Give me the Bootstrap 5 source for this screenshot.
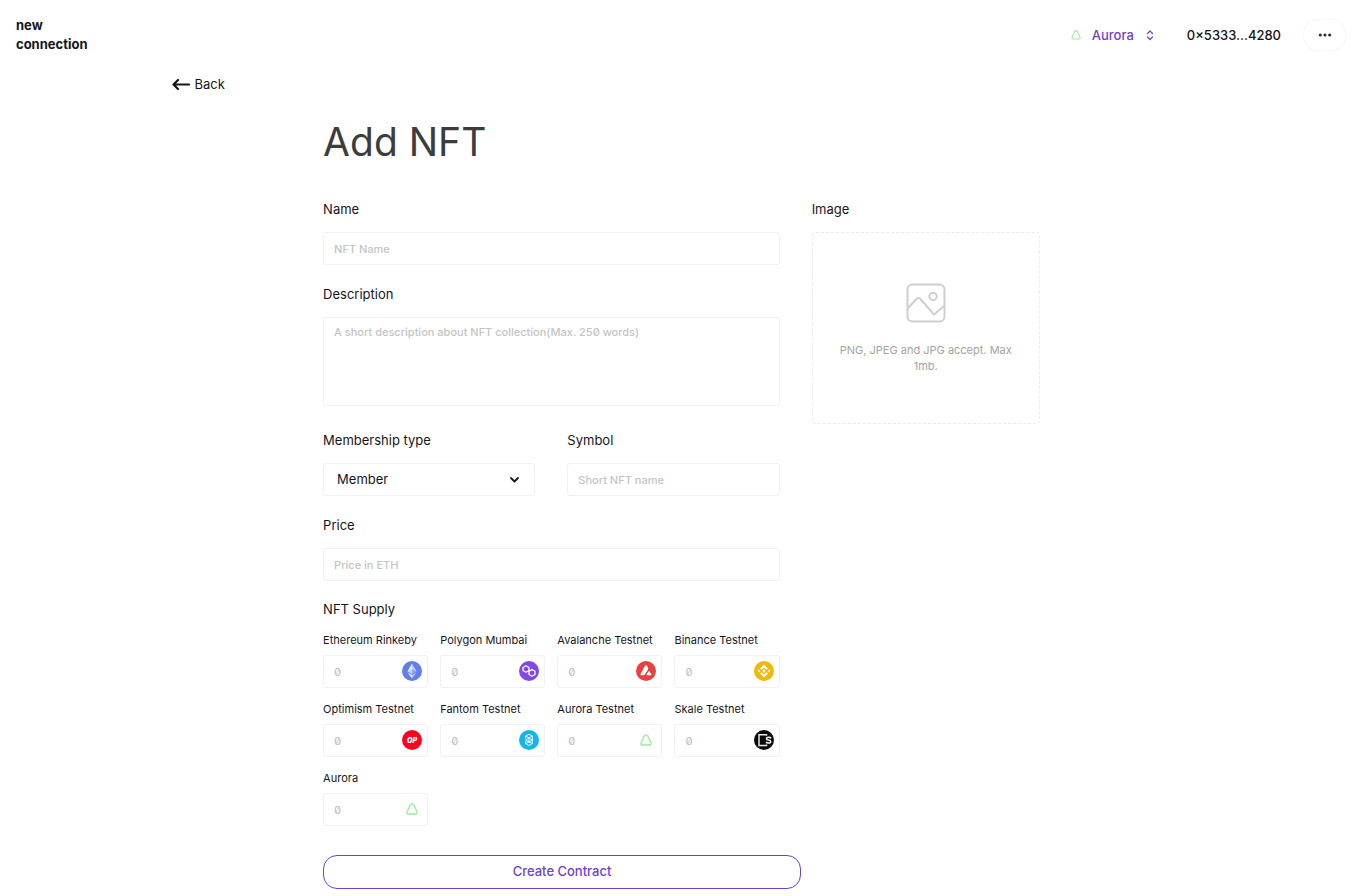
<!DOCTYPE html>
<html lang="en">
<head>
<meta charset="utf-8">
<meta name="viewport" content="width=device-width, initial-scale=1">
<title>Add NFT</title>
<link href="https://cdn.jsdelivr.net/npm/bootstrap@5.3.0/dist/css/bootstrap.min.css" rel="stylesheet">
<style>
  :root { --violet: #6f42c9; --ink: #16151c; --line: #f1f1f1; --hint: #c4c4c4; }
  body { font-family: Inter, "Liberation Sans", sans-serif; font-size: 13px; line-height: 20px; color: var(--ink); background: #fff; }
  svg { display: block; flex: none; }
  .topbar { height: 69px; padding: 0 21px 0 16px; }
  .brand { line-height: 19px; font-weight: 700; color: var(--ink); }
  .chain { color: var(--violet); font-weight: 500; font-size: 13px; line-height: 20px; border: 0; padding: 0; gap: 8px; }
  .account { font-weight: 500; margin: 0 22px 0 29px; }
  .more { width: 43px; height: 32px; border: 1px solid #f6f6f6; border-radius: 14px; padding: 0; }
  .shell { max-width: 1024px; }
  .back { color: var(--ink); margin: 5px 0 0 2px; gap: 5px; }
  .sheet { width: 70%; }
  .sheet h1 { font-size: 39px; line-height: 48px; font-weight: 400; color: #3c3c3c; margin: 22px 0 33px; }
  .cols { display: grid; grid-template-columns: 2fr 1fr; gap: 32px; align-items: start; }
  .fields { display: grid; gap: 19px; }
  .fields fieldset { margin-top: -1px; }
  .pair { display: grid; grid-template-columns: 1fr 1fr; gap: 32px; }
  .caption { display: block; float: none; font-size: 13px; line-height: 20px; margin-bottom: 13px; }
  .fields .form-control, .fields .form-select { height: 33px; padding: 0 10px; font-size: 11px; line-height: 18px; border: 1px solid var(--line); border-radius: 3px; color: var(--ink); }
  .fields .form-control::placeholder { color: var(--hint); opacity: 1; font-weight: 500; font-feature-settings: "zero"; }
  .fields textarea.form-control { height: 89px; padding-top: 5px; resize: none; margin-bottom: 5px; }
  .fields .form-select { font-size: 13px; padding: 0 32px 1px 13px; background-size: 11px 11px; background-position: right 14px center;
    background-image: url("data:image/svg+xml,%3Csvg xmlns='http://www.w3.org/2000/svg' viewBox='0 0 11 11'%3E%3Cpath d='M2 4l3.5 3.5L9 4' fill='none' stroke='%2316151c' stroke-width='1.8' stroke-linecap='round' stroke-linejoin='round'/%3E%3C/svg%3E"); }
  .supply { display: grid; grid-template-columns: repeat(4, 1fr); gap: 12px; margin-top: -1px; }
  .supply label { display: block; font-size: 11px; line-height: 18px; white-space: nowrap; margin-bottom: 6px; }
  .supply .form-control { padding-right: 34px; }
  .coin { right: 6px; top: 6px; pointer-events: none; }
  .drop { height: 192px; border: 1px dashed #ececec; border-radius: 4px; font-size: 11px; line-height: 16px; color: #a3a3a3; padding: 0 20px; cursor: pointer; gap: 19px; }
  .create { width: 66.6667%; height: 34px; margin-top: 29px; border: 1px solid var(--violet); border-radius: 14px; color: var(--violet); font-size: 13px; font-weight: 500; line-height: 20px; padding: 0 0 2px; }
  .create:hover { background: var(--violet); color: #fff; }
</style>
</head>
<body>
<svg width="0" height="0" class="position-absolute" aria-hidden="true">
  <symbol id="aurora" viewBox="0 0 20 20"><path d="M8.300 5.800Q10 3.300 11.700 5.800L14.900 12.600Q15.700 15 13.500 15H6.500Q4.300 15 5.100 12.600Z" fill="none" stroke="#98ec9a" stroke-width="1.300"/></symbol>
</svg>

<nav class="topbar d-flex align-items-center justify-content-between">
  <a href="#" class="brand text-decoration-none">new<br>connection</a>
  <div class="d-flex align-items-center">
    <button type="button" class="btn chain d-flex align-items-center">
      <svg width="16" height="16"><use href="#aurora"/></svg>
      <span>Aurora</span>
      <svg width="16" height="16" viewBox="0 0 16 16" fill="none" stroke="#6f42c9" stroke-width="1.200" stroke-linecap="round" stroke-linejoin="round"><path d="M5.500 6.500L8 4l2.500 2.500M5.500 10L8 12.500l2.500-2.500"/></svg>
    </button>
    <span class="account">0×5333...4280</span>
    <button type="button" class="btn more d-flex align-items-center justify-content-center" aria-label="More options">
      <svg width="14" height="4" viewBox="0 0 14 4" fill="#333"><circle cx="2.300" cy="2" r="1.600"/><circle cx="7" cy="2" r="1.600"/><circle cx="11.700" cy="2" r="1.600"/></svg>
    </button>
  </div>
</nav>

<main class="pe-1">
  <div class="shell mx-auto">
    <a href="#" class="back d-inline-flex align-items-center text-decoration-none">
      <svg width="18" height="14" viewBox="0 0 18 14" fill="none" stroke="#16151c" stroke-width="2.200" stroke-linecap="round" stroke-linejoin="round"><path d="M17 7.500H1.500M6 3L1.500 7.500L6 12"/></svg>
      Back
    </a>

    <form class="sheet mx-auto">
      <h1>Add NFT</h1>
      <div class="cols">
        <div class="fields">
          <div>
            <label class="caption" for="name">Name</label>
            <input class="form-control" id="name" type="text" placeholder="NFT Name">
          </div>
          <div>
            <label class="caption" for="description">Description</label>
            <textarea class="form-control" id="description" placeholder="A short description about NFT collection(Max. 250 words)"></textarea>
          </div>
          <div class="pair">
            <div>
              <label class="caption" for="membership">Membership type</label>
              <select class="form-select" id="membership"><option>Member</option></select>
            </div>
            <div>
              <label class="caption" for="symbol">Symbol</label>
              <input class="form-control" id="symbol" type="text" placeholder="Short NFT name">
            </div>
          </div>
          <div>
            <label class="caption" for="price">Price</label>
            <input class="form-control" id="price" type="text" placeholder="Price in ETH">
          </div>
          <fieldset>
            <legend class="caption">NFT Supply</legend>
            <div class="supply">
              <div>
                <label for="rinkeby">Ethereum Rinkeby</label>
                <div class="position-relative">
                  <input class="form-control" id="rinkeby" type="text" inputmode="numeric" placeholder="0">
                  <svg class="coin position-absolute" width="20" height="20" viewBox="0 0 20 20"><circle cx="10" cy="10" r="10" fill="#627eea"/><path d="M10 2.500L5.500 10.300 10 13z" fill="#e6ebff"/><path d="M10 2.500l4.500 7.800L10 13z" fill="#bccafa"/><path d="M5.500 11.400L10 17.500V14z" fill="#e6ebff"/><path d="M14.500 11.400L10 17.500V14z" fill="#bccafa"/><path d="M5.500 10.300L10 8.300V13z" fill="#c3cffa"/><path d="M14.500 10.300L10 8.300V13z" fill="#91a6f2"/></svg>
                </div>
              </div>
              <div>
                <label for="mumbai">Polygon Mumbai</label>
                <div class="position-relative">
                  <input class="form-control" id="mumbai" type="text" inputmode="numeric" placeholder="0">
                  <svg class="coin position-absolute" width="20" height="20" viewBox="0 0 20 20"><circle cx="10" cy="10" r="10" fill="#8247e5"/><g fill="none" stroke="#fff" stroke-width="1.300" stroke-linejoin="round"><path d="M10 9.500L7 11.200 4 9.500V6.500L7 4.800l3 1.700v4.200M10 10.700v2.800l3 1.700 3-1.700v-3.200l-3-1.700-3 1.700"/></g></svg>
                </div>
              </div>
              <div>
                <label for="avalanche">Avalanche Testnet</label>
                <div class="position-relative">
                  <input class="form-control" id="avalanche" type="text" inputmode="numeric" placeholder="0">
                  <svg class="coin position-absolute" width="20" height="20" viewBox="0 0 20 20"><circle cx="10" cy="10" r="10" fill="#e84142"/><path d="M9.200 4.600Q10 3.400 10.800 4.600L12 6.800Q12.400 7.600 12 8.400L8.900 13.600Q8.500 14.200 7.800 14.200H5Q4 14.200 4.500 13.200ZM12.500 10.500Q13 9.700 13.500 10.500L15.500 13.400Q15.800 14.200 15 14.200H11.100Q10.200 14.200 10.600 13.400Z" fill="#fff"/></svg>
                </div>
              </div>
              <div>
                <label for="binance">Binance Testnet</label>
                <div class="position-relative">
                  <input class="form-control" id="binance" type="text" inputmode="numeric" placeholder="0">
                  <svg class="coin position-absolute" width="20" height="20" viewBox="0 0 20 20"><circle cx="10" cy="10" r="10" fill="#f0b90b"/><path d="M10 3.500l3.900 3.900-1.500 1.400L10 6.400 7.600 8.800 6.100 7.400zM10 16.500l-3.900-3.900 1.500-1.400 2.400 2.400 2.400-2.400 1.500 1.400zM5 8.500L6.500 10 5 11.500 3.500 10zM15 8.500l1.500 1.500-1.500 1.500L13.500 10zM10 8.300l1.700 1.700-1.700 1.700L8.300 10z" fill="#fff"/></svg>
                </div>
              </div>
              <div>
                <label for="optimism">Optimism Testnet</label>
                <div class="position-relative">
                  <input class="form-control" id="optimism" type="text" inputmode="numeric" placeholder="0">
                  <svg class="coin position-absolute" width="20" height="20" viewBox="0 0 20 20"><circle cx="10" cy="10" r="10" fill="#ff0420"/><text x="10" y="12.500" text-anchor="middle" font-family="Inter, sans-serif" font-size="7" font-weight="900" font-style="italic" fill="#fff">OP</text></svg>
                </div>
              </div>
              <div>
                <label for="fantom">Fantom Testnet</label>
                <div class="position-relative">
                  <input class="form-control" id="fantom" type="text" inputmode="numeric" placeholder="0">
                  <svg class="coin position-absolute" width="20" height="20" viewBox="0 0 20 20"><circle cx="10" cy="10" r="10" fill="#13b5ec"/><path d="M6.700 8.500V6L10 4.300 13.300 6v7.500L10 15.500l-3.300-2V11M6.700 6L10 7.900 13.300 6M10 7.900L13.300 10 10 12 6.700 10ZM10 7.900V12M6.700 13.500L10 12l3.300 1.500" fill="none" stroke="#fff" stroke-width=".9" stroke-linejoin="round"/></svg>
                </div>
              </div>
              <div>
                <label for="aurora-test">Aurora Testnet</label>
                <div class="position-relative">
                  <input class="form-control" id="aurora-test" type="text" inputmode="numeric" placeholder="0">
                  <svg class="coin position-absolute" width="20" height="20"><use href="#aurora"/></svg>
                </div>
              </div>
              <div>
                <label for="skale">Skale Testnet</label>
                <div class="position-relative">
                  <input class="form-control" id="skale" type="text" inputmode="numeric" placeholder="0">
                  <svg class="coin position-absolute" width="20" height="20" viewBox="0 0 20 20"><circle cx="10" cy="10" r="10" fill="#0a0a0a"/><path d="M12.500 5.800V4.800H5v10.600h7.500v-1" fill="none" stroke="#e8e8e8" stroke-width="1.500"/><path d="M17 8.200Q16.300 7.300 14.600 7.300Q12.500 7.300 12.500 8.700Q12.500 9.800 14.500 10.100Q16.700 10.400 16.700 11.700Q16.700 13 14.500 13Q12.700 13 11.900 12" fill="none" stroke="#fff" stroke-width="1.500"/></svg>
                </div>
              </div>
              <div>
                <label for="aurora-main">Aurora</label>
                <div class="position-relative">
                  <input class="form-control" id="aurora-main" type="text" inputmode="numeric" placeholder="0">
                  <svg class="coin position-absolute" width="20" height="20"><use href="#aurora"/></svg>
                </div>
              </div>
            </div>
          </fieldset>
        </div>

        <div>
          <label class="caption" for="image">Image</label>
          <label class="drop d-flex flex-column align-items-center justify-content-center text-center" for="image">
            <svg width="40" height="40" viewBox="0 0 40 40" fill="none" stroke="#cfcfcf" stroke-width="2"><rect x="1.500" y="1.500" width="37" height="37" rx="5"/><circle cx="27" cy="13.500" r="3.700"/><path d="M2 25L10.500 16Q12.500 14 14.500 16L28 31.500 38 23" stroke-linejoin="round"/></svg>
            <span>PNG, JPEG and JPG accept. Max 1mb.</span>
          </label>
          <input class="visually-hidden" id="image" type="file" accept="image/png, image/jpeg">
        </div>
      </div>
      <button type="button" class="btn create">Create Contract</button>
    </form>
  </div>
</main>
<script src="https://cdn.jsdelivr.net/npm/bootstrap@5.3.0/dist/js/bootstrap.bundle.min.js"></script>
</body>
</html>
